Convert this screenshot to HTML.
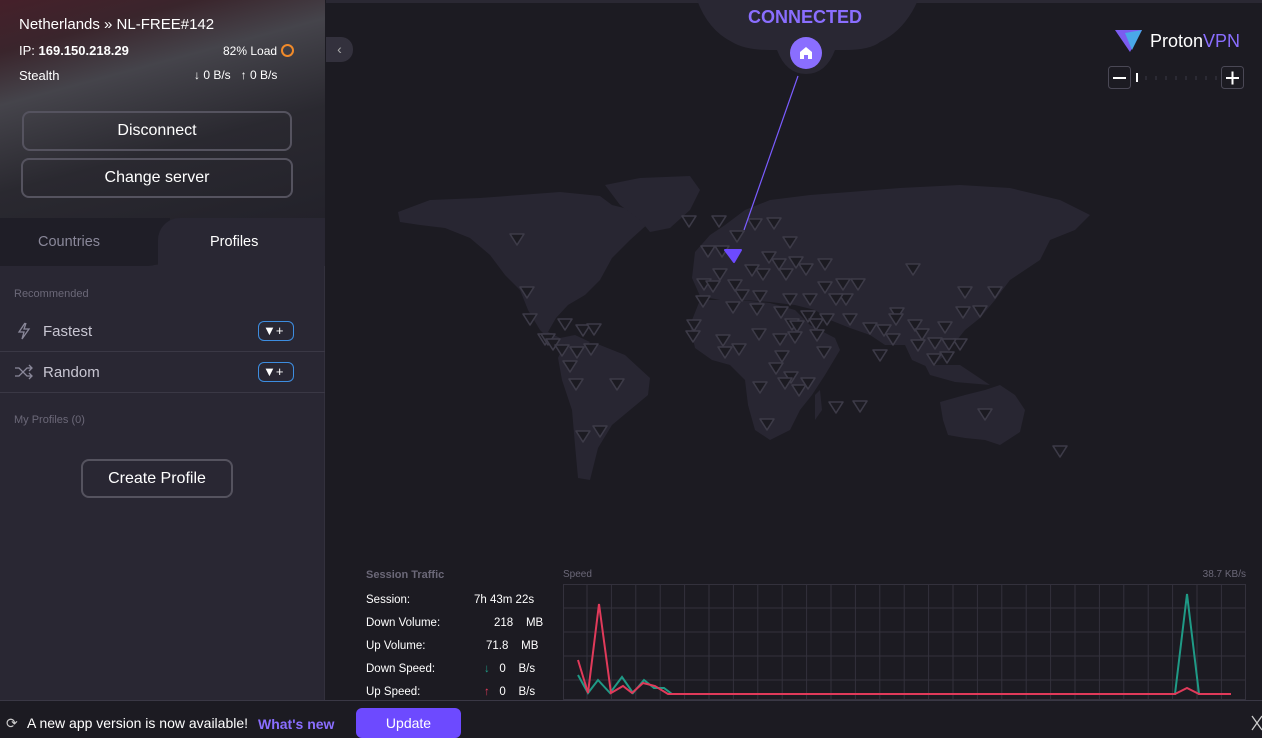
<!DOCTYPE html>
<html><head><meta charset="utf-8"><style>
*{margin:0;padding:0;box-sizing:border-box}
body{width:1262px;height:737px;overflow:hidden;background:#1c1b22;font-family:"Liberation Sans",sans-serif;color:#fff;position:relative}
.side{position:absolute;left:0;top:0;width:325px;height:700px;background:#292733;border-right:1px solid #33313d}
.hdr{position:absolute;left:0;top:0;width:325px;height:265px;background:linear-gradient(165deg,#45202a 0%,#3a252c 15%,#45444b 30%,#3a3940 40%,#2a2930 55%,#201f28 100%)}
.t{position:absolute;white-space:nowrap}
.btn{position:absolute;border:2px solid #55535f;border-radius:8px;text-align:center;font-size:16px;line-height:36px;color:#fff}
.tabs{position:absolute;left:0;top:218px;width:325px;height:48px}
.row{position:absolute;left:0;width:325px;height:41px;border-bottom:1px solid #3a3845}
.badge{position:absolute;right:31px;top:10px;width:36px;height:20px;border:1.5px solid #3d8de0;border-radius:6px;font-size:13px;line-height:17px;padding-left:4px}
.map{position:absolute;left:326px;top:0;width:936px;height:700px}
.st{font-size:11.5px;color:#fff;position:absolute}
.bar{position:absolute;left:0;top:700px;width:1262px;height:37px;background:#1c1b22;border-top:1px solid #3a3845}
</style></head><body>
<div class="map">
<svg width="936" height="700" viewBox="326 0 936 700" xmlns="http://www.w3.org/2000/svg">
<rect x="326" y="0" width="936" height="3" fill="#2a2833"/>
<g fill="#282632">
<path d="M398 212 L430 200 L480 198 L520 195 L560 192 L600 196 L612 205 L640 212 L650 222 L630 240 L612 258 L600 280 L585 295 L568 305 L556 318 L548 332 L560 338 L575 335 L590 342 L582 350 L565 346 L552 342 L540 330 L528 310 L520 290 L505 275 L490 255 L470 238 L445 228 L420 225 L400 222Z"/>
<path d="M605 185 L640 178 L690 176 L700 190 L690 210 L670 228 L650 232 L640 220 L620 205Z"/>
<path d="M565 342 L600 345 L625 355 L650 378 L648 395 L630 410 L612 425 L598 448 L590 480 L578 478 L575 445 L572 410 L562 380 L558 358Z"/>
<path d="M695 252 L710 235 L725 225 L745 210 L770 200 L810 195 L850 192 L900 188 L960 185 L1010 188 L1060 200 L1090 215 L1075 230 L1050 240 L1040 260 L1010 280 L995 300 L980 318 L965 330 L945 355 L930 368 L912 360 L905 345 L885 345 L870 335 L850 328 L830 320 L815 310 L795 305 L770 302 L745 300 L720 300 L700 296 L692 278Z"/>
<path d="M700 300 L740 300 L770 303 L795 310 L810 325 L835 338 L840 350 L825 375 L812 395 L800 410 L790 430 L770 440 L755 430 L748 405 L745 380 L730 365 L712 360 L695 348 L690 325Z"/>
<path d="M940 402 L965 395 L985 390 L1000 385 L1015 395 L1025 410 L1020 432 L1000 445 L985 440 L965 438 L948 435 L943 420Z"/>
<path d="M815 395 L820 390 L822 410 L815 420Z"/>
<path d="M925 365 L960 365 L990 385 L955 382 L930 375Z"/>
</g>
<g fill="#1c1b22" stroke="#3d3b48" stroke-width="1.6" stroke-linejoin="round" id="mk"></g>
<line x1="798" y1="76" x2="744" y2="230" stroke="#7a5cff" stroke-width="1.2"/>
<path d="M725 250 L741 250 L734 262Z" fill="#6d4aff" stroke="#6d4aff" stroke-width="2" stroke-linejoin="round"/>
<path d="M697 0 L918 0 Q905 30 880 42 Q870 50 845 50 L835 50 Q826 74 806 74 Q786 74 777 50 L770 50 Q745 50 732 42 Q708 30 697 0Z" fill="#292733"/>
<text x="805" y="23" fill="#8a6eff" font-size="18" font-weight="bold" text-anchor="middle" font-family="Liberation Sans">CONNECTED</text>
<circle cx="806" cy="53" r="16" fill="#8a6eff"/>
<path d="M800 59 L800 52 L806 47 L812 52 L812 59 L808 59 L808 55 L804 55 L804 59Z" fill="#fff"/>
<path d="M1115 30 L1142 30 L1130 52Z" fill="#7b5cf0"/>
<path d="M1125 33 L1142 30 L1132 50Z" fill="#4aa8e8"/>
<text x="1150" y="47" fill="#fff" font-size="18" font-family="Liberation Sans">Proton<tspan fill="#8a6eff">VPN</tspan></text>
<rect x="1108.5" y="66.5" width="22" height="22" rx="3" fill="none" stroke="#4a4855"/>
<rect x="1221.5" y="66.5" width="22" height="22" rx="3" fill="none" stroke="#4a4855"/>
<path d="M1113 78 H1126 M1226 78 H1239 M1232.5 71.5 V84.5" stroke="#fff" stroke-width="2"/>
<rect x="1136" y="73" width="2" height="9" fill="#fff"/>
<g stroke="#3a3845"><path d="M1146 76v4M1156 76v4M1166 76v4M1176 76v4M1186 76v4M1196 76v4M1206 76v4M1216 76v4"/></g>
<text x="366" y="578" fill="#6b6878" font-size="11" font-weight="bold">Session Traffic</text>
<text x="563" y="577" fill="#6b6878" font-size="10">Speed</text>
<text x="1246" y="577" fill="#6b6878" font-size="10" text-anchor="end">38.7 KB/s</text>
<g stroke="#33313c" stroke-width="1" id="grid"></g>
<polyline points="578,675 588,693 598,680 610,693 622,677 633,693 644,680 654,688 664,688 672,694 1175,694 1187,594 1199,694 1231,694" fill="none" stroke="#1f9a86" stroke-width="2"/>
<polyline points="578,660 588,693 599,604 611,693 623,686 632,693 643,683 655,686 668,694 1175,694 1187,688 1199,694 1231,694" fill="none" stroke="#e03a5a" stroke-width="2"/>
</svg>
<div class="st" style="left:40px;top:594px">Session:</div><div class="st" style="left:148px;top:594px">7h 43m 22s</div>
<div class="st" style="left:40px;top:617px">Down Volume:</div><div class="st" style="left:168px;top:617px">218&nbsp;&nbsp;&nbsp;&nbsp;MB</div>
<div class="st" style="left:40px;top:640px">Up Volume:</div><div class="st" style="left:160px;top:640px">71.8&nbsp;&nbsp;&nbsp;&nbsp;MB</div>
<div class="st" style="left:40px;top:663px">Down Speed:</div><div class="st" style="left:158px;top:663px"><span style="color:#1f9a86">↓</span>&nbsp;&nbsp;&nbsp;0&nbsp;&nbsp;&nbsp;&nbsp;B/s</div>
<div class="st" style="left:40px;top:686px">Up Speed:</div><div class="st" style="left:158px;top:686px"><span style="color:#e03a5a">↑</span>&nbsp;&nbsp;&nbsp;0&nbsp;&nbsp;&nbsp;&nbsp;B/s</div>
</div>
<div class="side">
<div class="hdr"></div>
<div class="t" style="left:19px;top:16px;font-size:15px">Netherlands » NL-FREE#142</div>
<div class="t" style="left:19px;top:43px;font-size:13px">IP: <b>169.150.218.29</b></div>
<div class="t" style="left:223px;top:44px;font-size:12px">82% Load</div>
<div style="position:absolute;left:281px;top:44px;width:13px;height:13px;border:2px solid #f08a2a;border-radius:50%"></div>
<div class="t" style="left:19px;top:68px;font-size:13px">Stealth</div>
<div class="t" style="left:194px;top:68px;font-size:12px">↓ 0 B/s&nbsp;&nbsp;&nbsp;↑ 0 B/s</div>
<div class="btn" style="left:22px;top:111px;width:270px;height:40px">Disconnect</div>
<div class="btn" style="left:21px;top:158px;width:272px;height:40px">Change server</div>
<div class="tabs">
<div style="position:absolute;left:0;top:0;width:170px;height:48px;background:#1f1e27;border-bottom-right-radius:22px"></div>
<div style="position:absolute;left:158px;top:0;width:167px;height:48px;background:#292733;border-top-left-radius:22px"></div>
<div class="t" style="left:38px;top:16px;font-size:14.5px;color:#8a889a">Countries</div>
<div class="t" style="left:210px;top:16px;font-size:14.5px">Profiles</div>
</div>
<div class="t" style="left:14px;top:288px;font-size:11px;color:#6b6878">Recommended</div>
<div class="row" style="top:311px">
<svg style="position:absolute;left:16px;top:11px" width="16" height="18"><path d="M9 1 L3 10 L8 10 L6 17 L13 7 L8 7 L10 1" fill="none" stroke="#8a889a" stroke-width="1.3"/></svg>
<div class="t" style="left:43px;top:12px;font-size:15px;color:#c8c6d2">Fastest</div>
<div class="badge">▼+</div></div>
<div class="row" style="top:352px">
<svg style="position:absolute;left:14px;top:12px" width="20" height="16"><path d="M1 4 H5 L13 12 H18 M1 12 H5 L13 4 H18 M15 1 L18 4 L15 7 M15 9 L18 12 L15 15" fill="none" stroke="#8a889a" stroke-width="1.3"/></svg>
<div class="t" style="left:43px;top:12px;font-size:15px;color:#c8c6d2">Random</div>
<div class="badge">▼+</div></div>
<div class="t" style="left:14px;top:414px;font-size:11px;color:#6b6878">My Profiles (0)</div>
<div class="btn" style="left:81px;top:459px;width:152px;height:39px">Create Profile</div>
</div>
<div style="position:absolute;left:326px;top:37px;width:27px;height:25px;background:#33313d;border-radius:0 12px 12px 0;color:#aaa;font-size:14px;line-height:25px;text-align:center">‹</div>
<div class="bar">
<div class="t" style="left:6px;top:14px;font-size:14px;color:#ccc">⟳</div>
<div class="t" style="left:27px;top:14px;font-size:14px">A new app version is now available!</div>
<div class="t" style="left:258px;top:15px;font-size:14px;color:#8a6eff;font-weight:bold">What's new</div>
<div style="position:absolute;left:356px;top:7px;width:105px;height:30px;background:#6d4aff;border-radius:6px;text-align:center;line-height:30px;font-size:14px">Update</div>
<svg style="position:absolute;left:1251px;top:14px" width="11" height="18"><path d="M1 1 L11 15 M11 1 L1 15" stroke="#ccc" stroke-width="1.3"/></svg>
</div>
<script>
var pts=[[517,240],[527,293],[530,320],[545,340],[565,325],[583,331],[594,330],[548,340],[553,345],[562,351],[577,353],[591,350],[570,367],[576,385],[617,385],[583,437],[600,432],[689,222],[719,222],[737,237],[755,225],[774,224],[790,243],[708,252],[722,252],[769,258],[720,275],[735,286],[752,271],[763,275],[779,265],[786,275],[796,263],[806,270],[825,265],[843,285],[846,300],[858,285],[913,270],[704,285],[713,287],[742,296],[760,297],[790,300],[810,300],[825,288],[703,302],[733,308],[757,310],[781,313],[792,325],[797,327],[808,317],[816,325],[827,320],[836,300],[850,320],[870,329],[897,314],[884,331],[896,320],[915,326],[918,346],[922,335],[945,328],[935,344],[934,360],[947,358],[965,293],[995,293],[960,345],[963,313],[980,312],[693,337],[694,326],[723,341],[725,353],[759,335],[780,340],[795,338],[817,336],[739,350],[824,353],[782,357],[776,369],[791,378],[799,391],[860,407],[760,388],[767,425],[785,384],[808,384],[836,408],[985,415],[1060,452],[880,356],[893,340],[949,345]];
var g=document.getElementById('mk'),s='';
pts.forEach(function(p){s+='<path d="M'+(p[0]-7)+' '+(p[1]-6)+' L'+(p[0]+7)+' '+(p[1]-6)+' L'+p[0]+' '+(p[1]+5)+'Z"/>';});
g.innerHTML=s;
var gr=document.getElementById('grid'),h='<rect x="563.5" y="584.5" width="682" height="115" fill="none"/>';
for(var x=587;x<1245;x+=24.4)h+='<line x1="'+x+'" y1="584" x2="'+x+'" y2="700"/>';
for(var y=608;y<700;y+=24)h+='<line x1="563" y1="'+y+'" x2="1245" y2="'+y+'"/>';
gr.innerHTML=h;
</script>
</body></html>
